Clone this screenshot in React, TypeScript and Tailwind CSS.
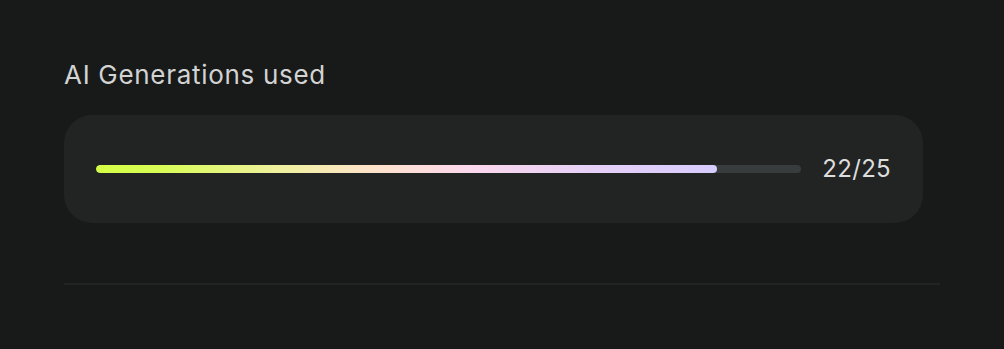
import React from 'react';

const used = 22;
const total = 25;

export default function App() {
  const pct = (used / total) * 100;

  return (
    <div className="min-h-screen w-full bg-[#181a19] px-16 pt-[59px] font-['Inter',sans-serif]">
      <h2 className="text-[26px] leading-8 text-[#d2d3d2] tracking-[0.7px]">AI Generations used</h2>

      {/* usage card */}
      <div className="mt-[24px] mr-[17px] flex h-[108px] items-center gap-[21px] rounded-[28px] bg-[#222323] px-8">
        <div className="relative h-2 flex-1 overflow-hidden rounded-full bg-[#393c3c]">
          <div
            className="h-full rounded-full bg-[linear-gradient(90deg,#d4ff45_0%,#d8fc55_10%,#f0f0a0_30%,#ffe2cc_45%,#fcd8ec_60%,#e8d0f6_78%,#d7ccff_100%)]"
            style={{ width: `${pct}%` }}
          />
        </div>
        <span className="text-[24px] leading-8 text-[#dcdddc] tracking-[0.3px]">
          {used}/{total}
        </span>
      </div>

      <div className="mt-[60px] h-[2px] bg-[#222423]" />
    </div>
  );
}
